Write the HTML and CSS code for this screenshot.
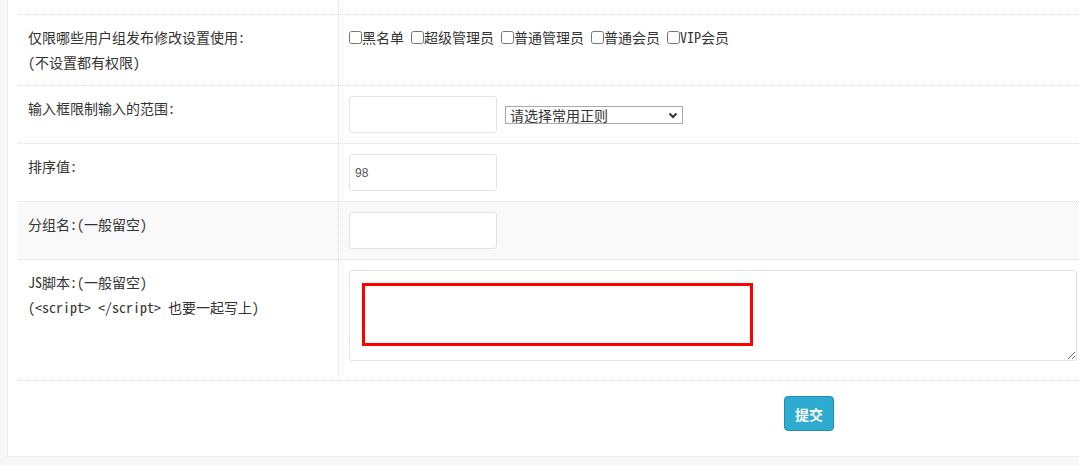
FILE: index.html
```html
<!DOCTYPE html>
<html lang="zh-CN">
<head>
<meta charset="utf-8">
<title>表单设置</title>
<link rel="stylesheet" href="styles.css">
</head>
<body>
<div class="panel">
  <div class="form">
    <div class="row row-top">
      <div class="lab"></div>
      <div class="val"></div>
    </div>
    <div class="row">
      <div class="lab">仅限哪些用户组发布修改设置使用:<br>(不设置都有权限)</div>
      <div class="val">
        <label class="chk"><input type="checkbox">黑名单</label>
        <label class="chk"><input type="checkbox">超级管理员</label>
        <label class="chk"><input type="checkbox">普通管理员</label>
        <label class="chk"><input type="checkbox">普通会员</label>
        <label class="chk"><input type="checkbox">VIP会员</label>
      </div>
    </div>
    <div class="row">
      <div class="lab">输入框限制输入的范围:</div>
      <div class="val inline">
        <input class="text" type="text">
        <span class="sel-wrap">
          <select class="sel">
            <option>请选择常用正则</option>
          </select>
          <svg class="sel-arrow" width="10" height="7" viewBox="0 0 10 7" aria-hidden="true"><path d="M1.5 1.5 L5 5 L8.5 1.5" fill="none" stroke="#333" stroke-width="2"/></svg>
        </span>
      </div>
    </div>
    <div class="row">
      <div class="lab">排序值:</div>
      <div class="val"><input class="text" type="text" value="98"></div>
    </div>
    <div class="row row-alt">
      <div class="lab">分组名:(一般留空)</div>
      <div class="val"><input class="text" type="text"></div>
    </div>
    <div class="row">
      <div class="lab">JS脚本:(一般留空)<br>(&lt;script&gt; &lt;/script&gt; 也要一起写上)</div>
      <div class="val">
        <div class="area-wrap">
          <textarea class="area"></textarea>
          <div class="mark"></div>
        </div>
      </div>
    </div>
    <div class="row-submit">
      <button class="btn" type="button">提交</button>
    </div>
  </div>
</div>
</body>
</html>
```

FILE: styles.css
```css
html, body {
  margin: 0;
  padding: 0;
}
body {
  background: #f7f7f7;
  font-family: "Noto Sans Mono CJK SC", "Noto Sans CJK SC", sans-serif;
  font-size: 14px;
  color: #333;
  overflow: hidden;
}
.panel {
  margin-left: 7px;
  background: #fff;
  border-left: 1px solid #ececec;
  border-bottom: 1px solid #ececec;
  padding-left: 10px;
}
.form {
  display: flex;
  flex-direction: column;
}
.row {
  display: grid;
  grid-template-columns: 321px 1fr;
  border-bottom: 1px dotted #dcdcdc;
}
.row-alt {
  background: #f9f9f9;
}
.lab {
  padding: 10px;
  line-height: 25px;
  border-right: 1px dotted #dcdcdc;
  white-space: nowrap;
}
.val {
  padding: 10px 2px 10px 10px;
  line-height: 25px;
}
.row-top .lab,
.row-top .val {
  padding: 0;
  height: 14px;
}
.inline {
  display: flex;
  align-items: center;
  gap: 8px;
}
.chk {
  white-space: nowrap;
}
.chk input {
  margin: 0;
  width: 13px;
  height: 13px;
  vertical-align: -1px;
}
.text {
  display: block;
  box-sizing: border-box;
  width: 148px;
  height: 37px;
  border: 1px solid #dfe4ea;
  border-radius: 3px;
  padding: 0 5px;
  font-family: "Liberation Sans", sans-serif;
  font-size: 12px;
  color: #555;
  background: #fff;
  outline: none;
}
.sel-wrap {
  position: relative;
  display: block;
  width: 178px;
  height: 18px;
}
.sel {
  -webkit-appearance: none;
  appearance: none;
  display: block;
  box-sizing: border-box;
  width: 178px;
  height: 18px;
  margin: 0;
  border: 1px solid #a9a9a9;
  border-radius: 0;
  background: #fff;
  padding: 0 0 0 4px;
  font-family: "Noto Sans CJK SC", sans-serif;
  font-size: 14px;
  line-height: 16px;
  color: #333;
  overflow: hidden;
}
.sel-arrow {
  position: absolute;
  right: 5px;
  top: 6px;
  pointer-events: none;
}
.area-wrap {
  position: relative;
  margin-bottom: 9px;
}
.area {
  display: block;
  box-sizing: border-box;
  width: 100%;
  height: 91px;
  border: 1px solid #e3e3e3;
  border-radius: 3px;
  background: #fff;
  outline: none;
}
.mark {
  position: absolute;
  left: 13px;
  top: 13px;
  width: 391px;
  height: 63px;
  box-sizing: border-box;
  border: 3px solid #ff0000;
}
.row-submit {
  padding: 15px 0 25px 766px;
}
.btn {
  display: block;
  box-sizing: border-box;
  width: 50px;
  height: 35px;
  border: 1px solid #1d8db3;
  border-radius: 4px;
  background: #2eabd0;
  color: #fff;
  font-family: "Noto Sans CJK SC", sans-serif;
  font-size: 14px;
  font-weight: bold;
  padding: 0;
}
```
